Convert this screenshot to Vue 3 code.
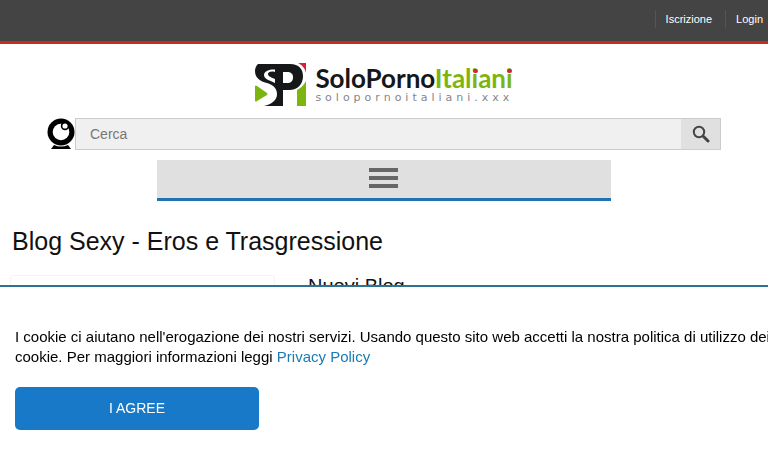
<template>
  <div class="page">
    <header class="top-bar">
      <nav class="user-links">
        <a v-for="link in userLinks" :key="link" href="#">{{ link }}</a>
      </nav>
    </header>

    <a class="logo" href="#">
      <svg class="logo-mark" viewBox="0 0 52 44" aria-hidden="true">
        <path fill="#151719" d="M3 1H35C44 1 48 6 48 13C48 21 43 27 34 27H28V43H9C17 41 22 37 22 31C22 25 18 22 12 20C4 18 0 14 0 8C0 5 1 3 3 1Z" />
        <path fill="#fff" d="M20 6.5C13 6 9 9 9 12C9 16 14 17 20 20V16C15 14 13 13 13 11C13 9 16 8 20 9Z" />
        <path fill="#fff" d="M28 9H32C36 9 38 11 38 14C38 18 36 20 32 20H28Z" />
        <path fill="#7db510" d="M0 23Q1 22 2 23L12 30Q13 31 12 32L2 38Q1 39 0 38Z" />
        <path fill="#7db510" d="M42 27C46 25 49 22 51 18V43H42Z" />
        <path fill="#d9203a" d="M43 0H51V10C50 5 47 2 43 0Z" />
      </svg>
      <span class="logo-text">
        <span class="logo-name">SoloPorno<span class="green">Ital<span class="dotted">i</span>an<span class="dotted">i</span></span></span>
        <span class="logo-domain">solopornoitaliani.xxx</span>
      </span>
    </a>

    <form class="search" @submit.prevent>
      <svg class="webcam" viewBox="0 0 28 32" aria-hidden="true">
        <circle cx="14" cy="14" r="13.5" />
        <circle cx="14" cy="14" r="8.3" fill="#fff" />
        <circle cx="18" cy="8" r="4.2" />
        <circle cx="18" cy="8" r="2.6" fill="#fff" />
        <path d="M7 27Q14 30 21 27L24 31H4Z" />
      </svg>
      <input v-model="query" type="text" placeholder="Cerca" aria-label="Cerca" />
      <button type="submit" aria-label="Cerca">
        <svg viewBox="0 0 18 18" aria-hidden="true">
          <circle cx="7" cy="7" r="5.2" fill="none" stroke="#444" stroke-width="2" />
          <path d="M11.5 11.5L16 16" stroke="#444" stroke-width="3" stroke-linecap="round" />
        </svg>
      </button>
    </form>

    <button class="menu" type="button" aria-label="Menu" @click="menuOpen = !menuOpen">
      <span v-for="n in 3" :key="n" class="menu-line"></span>
    </button>

    <main>
      <h1>Blog Sexy - Eros e Trasgressione</h1>
      <div class="columns">
        <aside class="card"></aside>
        <section>
          <h2>Nuovi Blog</h2>
        </section>
      </div>
    </main>

    <div v-if="cookieVisible" class="cookie">
      <p>
        I cookie ci aiutano nell'erogazione dei nostri servizi. Usando questo sito web accetti la nostra politica di utilizzo dei cookie. Per maggiori informazioni leggi
        <a href="#">Privacy Policy</a>
      </p>
      <button type="button" @click="cookieVisible = false">I AGREE</button>
    </div>
  </div>
</template>

<script setup>
import { ref } from 'vue';

const userLinks = ['Iscrizione', 'Login'];
const query = ref('');
const menuOpen = ref(false);
const cookieVisible = ref(true);
</script>

<style>
body {
  margin: 0;
  background: #fff;
}
</style>

<style scoped>
.page {
  height: 100vh;
  overflow: hidden;
  color: #111;
  font-family: 'Liberation Sans', Arial, sans-serif;
}

.top-bar {
  display: flex;
  justify-content: flex-end;
  padding: 10px 0 13px;
  background: #444;
  border-bottom: 3px solid #c52d1d;
}
.user-links {
  display: flex;
}
.user-links a {
  padding: 0 13px 0 10px;
  border-left: 1px solid #555;
  color: #fff;
  font-size: 11px;
  line-height: 18px;
  text-decoration: none;
}
.user-links a:last-child {
  padding-right: 5px;
}

.logo {
  display: flex;
  justify-content: center;
  gap: 8px;
  margin-top: 19px;
  color: #151719;
  text-decoration: none;
}
.logo-mark {
  width: 52px;
  height: 44px;
}
.logo-text {
  display: flex;
  flex-direction: column;
}
.logo-name {
  font-family: Lato, sans-serif;
  font-size: 26px;
  font-weight: 700;
  line-height: 30px;
}
.green {
  color: #7db510;
}
.dotted {
  position: relative;
}
.dotted::before {
  content: '';
  position: absolute;
  top: 7px;
  left: 1px;
  width: 5px;
  height: 4px;
  border-radius: 2px;
  background: #d9203a;
}
.logo-domain {
  margin-right: -4px;
  color: #85858d;
  font-family: 'DejaVu Sans', sans-serif;
  font-size: 11px;
  letter-spacing: 4px;
  line-height: 10px;
}

.search {
  display: flex;
  height: 32px;
  margin: 11px 47px 0;
}
.webcam {
  width: 28px;
  height: 32px;
}
.search input {
  flex: 1;
  min-width: 0;
  padding: 0 14px;
  border: 1px solid #ccc;
  border-right: 0;
  border-radius: 0;
  background: #f0f0f0;
  font: 14px 'Liberation Sans', Arial, sans-serif;
  outline: none;
}
.search input::placeholder {
  color: #777;
}
.search button {
  display: flex;
  align-items: center;
  justify-content: center;
  width: 40px;
  padding: 0;
  border: 1px solid #ccc;
  border-left: 0;
  background: #e0e0e0;
  cursor: pointer;
}
.search button svg {
  width: 18px;
  height: 18px;
}

.menu {
  display: flex;
  flex-direction: column;
  align-items: center;
  gap: 4px;
  width: 59%;
  margin: 10px auto 0;
  padding: 8px 0 10px;
  border: 0;
  border-bottom: 3px solid #2173b0;
  background: #e0e0e0;
  cursor: pointer;
}
.menu-line {
  width: 29px;
  height: 4px;
  background: #666;
}

main {
  padding: 0 10px;
}
h1 {
  margin: 26px 2px 0;
  font-size: 25px;
  font-weight: normal;
  line-height: 28px;
}
.columns {
  display: grid;
  grid-template-columns: 265px 1fr;
  gap: 33px;
  margin-top: 20px;
}
.card {
  min-height: 300px;
  border: 1px solid #f4f4f4;
  border-radius: 3px;
  box-sizing: border-box;
}
h2 {
  margin: 0;
  font-size: 20px;
  font-weight: normal;
  line-height: 22px;
}

.cookie {
  position: fixed;
  right: 0;
  bottom: 0;
  left: 0;
  padding: 40px 0 40px 15px;
  border-top: 2px solid #2c7391;
  background: #fff;
}
.cookie p {
  margin: 0 -5px 20px 0;
  color: #000;
  font-size: 15px;
  line-height: 20px;
}
.cookie a {
  color: #1b7bb5;
  text-decoration: none;
}
.cookie button {
  width: 244px;
  padding: 12px;
  border: 0;
  border-radius: 5px;
  background: #1779c8;
  color: #fff;
  font: 14px/19px 'Liberation Sans', Arial, sans-serif;
  cursor: pointer;
}
</style>
